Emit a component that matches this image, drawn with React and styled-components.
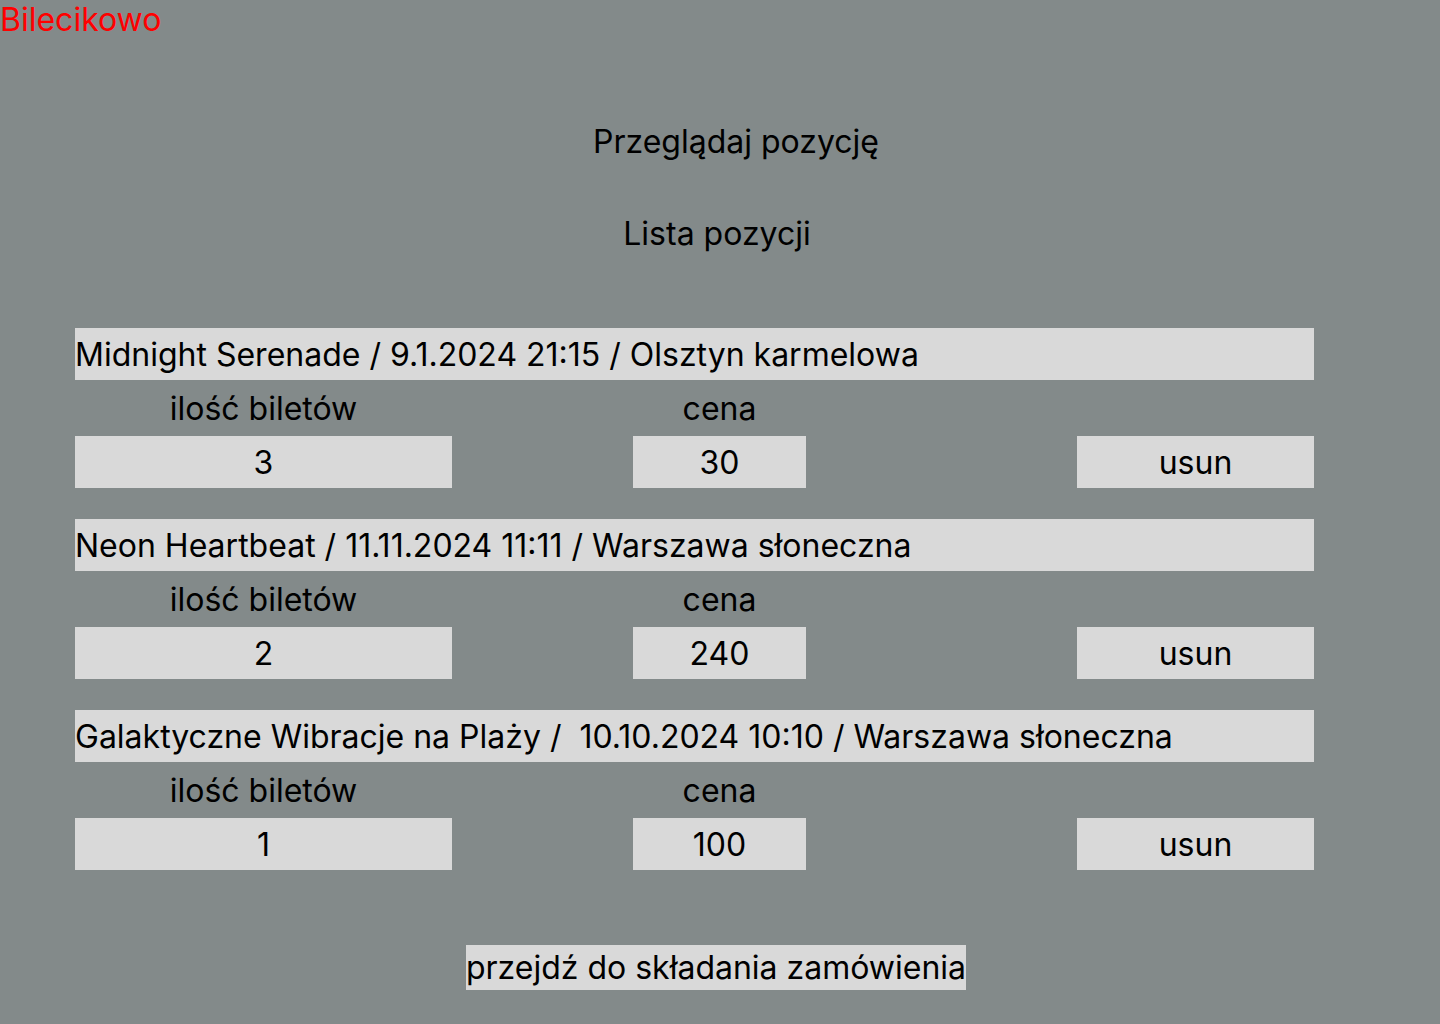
import React from "react";
import styled, { createGlobalStyle } from "styled-components";

const GlobalStyle = createGlobalStyle`
  html, body {
    margin: 0;
    padding: 0;
    background: #838a8a;
  }
  body {
    font-family: Inter, "Noto Sans", sans-serif;
    color: #000;
    min-height: 1024px;
  }
`;

const Page = styled.div`
  width: 1440px;
  min-height: 1024px;
  background: #838a8a;
  display: flex;
  flex-direction: column;
`;

const Logo = styled.div`
  font-size: 32px;
  line-height: normal;
  color: #ff0000;
  align-self: flex-start;
`;

const Main = styled.main`
  display: flex;
  flex-direction: column;
  align-items: center;
`;

const Heading = styled.h1`
  margin: ${(p) => p.$top}px 0 0;
  font-size: 32px;
  font-weight: 400;
  line-height: normal;
  margin-left: ${(p) => (p.$shift > 0 ? p.$shift * 2 : 0)}px;
  margin-right: ${(p) => (p.$shift < 0 ? -p.$shift * 2 : 0)}px;
`;

const List = styled.section`
  align-self: flex-start;
  margin: 75px 0 0 75px;
  width: 1239px;
  display: flex;
  flex-direction: column;
  gap: 31px;
`;

const Item = styled.article`
  display: grid;
  grid-template-columns: 377px 181px 173px 271px 237px;
  grid-template-rows: 52px 56px 52px;
`;

const ItemTitle = styled.div`
  grid-column: 1 / -1;
  background: #d9d9d9;
  font-size: 32px;
  display: flex;
  align-items: center;
  white-space: pre;
`;

const Label = styled.div`
  grid-column: ${(p) => p.$col};
  grid-row: 2;
  font-size: 32px;
  display: flex;
  align-items: center;
  justify-content: center;
`;

const Field = styled.div`
  grid-column: ${(p) => p.$col};
  grid-row: 3;
  background: #d9d9d9;
  font-size: 32px;
  display: flex;
  align-items: center;
  justify-content: center;
`;

const RemoveButton = styled.button`
  grid-column: 5;
  grid-row: 3;
  background: #d9d9d9;
  border: none;
  padding: 0;
  margin: 0;
  font-family: inherit;
  font-size: 32px;
  color: #000;
  display: flex;
  align-items: center;
  justify-content: center;
`;

const OrderButton = styled.button`
  margin: 75px 8px 0 0;
  height: 45px;
  padding: 0;
  border: none;
  background: #d9d9d9;
  font-family: inherit;
  font-size: 32px;
  color: #000;
  display: flex;
  align-items: center;
`;

const items = [
  { title: "Midnight Serenade / 9.1.2024 21:15 / Olsztyn karmelowa", qty: 3, price: 30 },
  { title: "Neon Heartbeat / 11.11.2024 11:11 / Warszawa słoneczna", qty: 2, price: 240 },
  { title: "Galaktyczne Wibracje na Plaży /  10.10.2024 10:10 / Warszawa słoneczna", qty: 1, price: 100 },
];

export default function App() {
  return (
    <Page>
      <GlobalStyle />
      <Logo>Bilecikowo</Logo>
      <Main>
        <Heading $top={83} $shift={16}>Przeglądaj pozycję</Heading>
        <Heading $top={53} $shift={-3}>Lista pozycji</Heading>
        <List>
          {items.map((it) => (
            <Item key={it.title}>
              <ItemTitle>{it.title}</ItemTitle>
              <Label $col={1}>ilość biletów</Label>
              <Label $col={3}>cena</Label>
              <Field $col={1}>{it.qty}</Field>
              <Field $col={3}>{it.price}</Field>
              <RemoveButton>usun</RemoveButton>
            </Item>
          ))}
        </List>
        <OrderButton>przejdź do składania zamówienia</OrderButton>
      </Main>
    </Page>
  );
}
